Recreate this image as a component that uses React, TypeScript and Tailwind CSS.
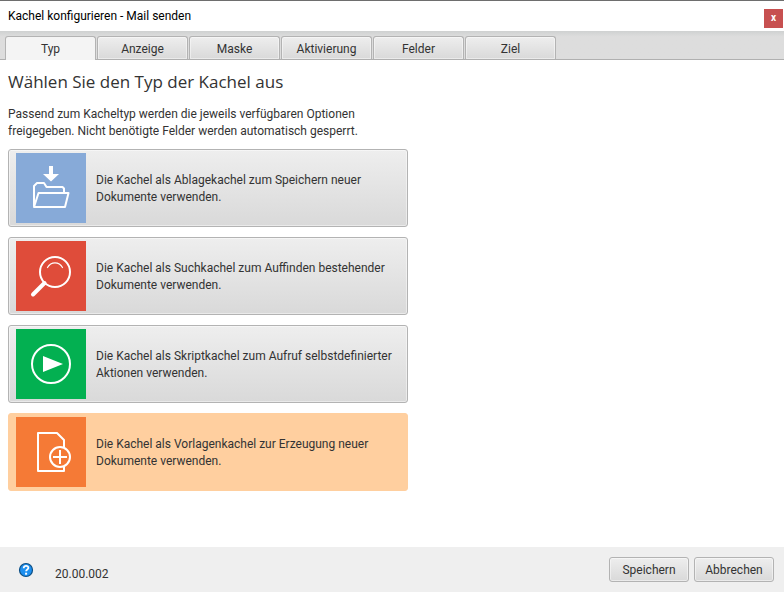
import React, { useState } from "react";

const TABS = ["Typ", "Anzeige", "Maske", "Aktivierung", "Felder", "Ziel"];

function FolderIcon() {
  return (
    <svg viewBox="0 0 70 70" className="block size-full" fill="none" stroke="#fff" strokeWidth="2" strokeLinejoin="round" aria-hidden="true">
      <path d="M33 13h4v8h6l-8 7.500-8-7.500h6z" fill="#fff" stroke="none" />
      <path d="M18 53.500V33l3-3h7l2.500 4h16l1.500 1.500V40" />
      <path d="M18 54L22.500 40H52.500L49 54z" />
    </svg>
  );
}

function SearchIcon() {
  return (
    <svg viewBox="0 0 70 70" className="block size-full" fill="none" stroke="#fff" strokeLinecap="round" aria-hidden="true">
      <circle cx="39" cy="31" r="15" strokeWidth="2" />
      <path d="M31.500 26.500c3.500-6.300 11.500-6.300 15 0" strokeWidth="1.200" />
      <path d="M28.500 42L17 53.500" strokeWidth="4" />
    </svg>
  );
}

function PlayIcon() {
  return (
    <svg viewBox="0 0 70 70" className="block size-full" fill="none" aria-hidden="true">
      <circle cx="35" cy="35" r="19" stroke="#fff" strokeWidth="2" />
      <path d="M27 27l20 8-20 8z" fill="#fff" />
    </svg>
  );
}

function TemplateIcon() {
  return (
    <svg viewBox="0 0 70 70" className="block size-full" fill="none" stroke="#fff" strokeWidth="2" strokeLinejoin="round" aria-hidden="true">
      <path d="M48 30V23L41 16H22V54H48V50" />
      <circle cx="44" cy="40" r="10" />
      <path d="M37 40h14M44 33v14" />
    </svg>
  );
}

const TILES = [
  { Icon: FolderIcon, color: "bg-[#87aad8]", text: "Die Kachel als Ablagekachel zum Speichern neuer Dokumente verwenden." },
  { Icon: SearchIcon, color: "bg-[#df4c3a]", text: "Die Kachel als Suchkachel zum Auffinden bestehender Dokumente verwenden." },
  { Icon: PlayIcon, color: "bg-[#03b051]", text: "Die Kachel als Skriptkachel zum Aufruf selbstdefinierter Aktionen verwenden." },
  { Icon: TemplateIcon, color: "bg-[#f57a36]", text: "Die Kachel als Vorlagenkachel zur Erzeugung neuer Dokumente verwenden." },
];

const RAISED = "border border-[#b3b3b3] bg-linear-to-b from-[#eeeeee] to-[#d9d9d9] shadow-[inset_0_0_0_1px_rgba(255,255,255,0.45)]";

export default function App() {
  const [tab, setTab] = useState(0);
  const [selected, setSelected] = useState(3);

  return (
    <div className="flex min-h-screen flex-col bg-white font-[Roboto,'Open_Sans',sans-serif] text-xs text-[#333333]">
      <header className="flex h-[31px] items-center justify-between border-t border-[#6e6e6e] pr-px pl-2 text-black">
        <span>Kachel konfigurieren - Mail senden</span>
        <button type="button" aria-label="Schließen" className="mt-1 flex h-[19px] w-[19px] items-center justify-center bg-[#c75050] text-[10px] leading-none font-bold text-white">
          x
        </button>
      </header>

      <div role="tablist" className="flex h-[29px] items-end gap-px border-b border-[#b0b0b0] bg-linear-to-b from-[#cfd1d1] to-[#dddddd] to-20% pl-[5px]">
        {TABS.map((name, i) => (
          <button
            key={name}
            type="button"
            role="tab"
            aria-selected={tab === i}
            onClick={() => setTab(i)}
            className={
              tab === i
                ? "-mb-px h-6 w-[91px] rounded-t-[3px] border border-b-0 border-[#b3b3b3] bg-[#f4f4f4]"
                : `h-[23px] w-[91px] rounded-t-[3px] border-b-0 pt-px ${RAISED}`
            }
          >
            {name}
          </button>
        ))}
      </div>

      <main className="flex-1 px-2 pt-2">
        <h1 className="font-['Open_Sans',sans-serif] text-[17px] leading-7">Wählen Sie den Typ der Kachel aus</h1>
        <p className="mt-[10px] max-w-[400px] leading-[17px]">
          Passend zum Kacheltyp werden die jeweils verfügbaren Optionen
          <br />
          freigegeben. Nicht benötigte Felder werden automatisch gesperrt.
        </p>
        <div className="mt-[9px] flex max-w-[400px] flex-col gap-[10px]">
          {TILES.map(({ Icon, color, text }, i) => (
            <button
              key={text}
              type="button"
              aria-pressed={selected === i}
              onClick={() => setSelected(i)}
              className={`flex h-[78px] items-center gap-[10px] rounded-[3px] px-[7px] text-left leading-[17px] ${
                selected === i ? "border border-[#ffcf9f] bg-[#ffcf9f]" : RAISED
              }`}
            >
              <span className={`size-[70px] shrink-0 ${color}`}>
                <Icon />
              </span>
              <span className="pt-0.5">{text}</span>
            </button>
          ))}
        </div>
      </main>

      <footer className="flex h-[45px] items-center bg-[#efefef] pr-[10px] pl-[18px]">
        <button type="button" aria-label="Hilfe" className="size-4">
          <svg viewBox="0 0 16 16" className="block size-full" fill="none" aria-hidden="true">
            <circle cx="8" cy="8" r="6.500" fill="#1e90f0" stroke="#0d4f85" strokeWidth="1.200" />
            <path d="M5.700 6.200c0-3.200 4.800-3 4.700-.2C10.300 7.500 8.100 7.500 8.100 9.300" stroke="#fff" strokeWidth="1.800" />
            <path d="M7.100 10.700h2v2h-2z" fill="#fff" />
          </svg>
        </button>
        <span className="mt-2 ml-[21px]">20.00.002</span>
        <div className="ml-auto flex gap-[5px]">
          <button type="button" className={`h-[25px] w-20 rounded-[3px] ${RAISED}`}>Speichern</button>
          <button type="button" className={`h-[25px] w-20 rounded-[3px] ${RAISED}`}>Abbrechen</button>
        </div>
      </footer>
    </div>
  );
}
